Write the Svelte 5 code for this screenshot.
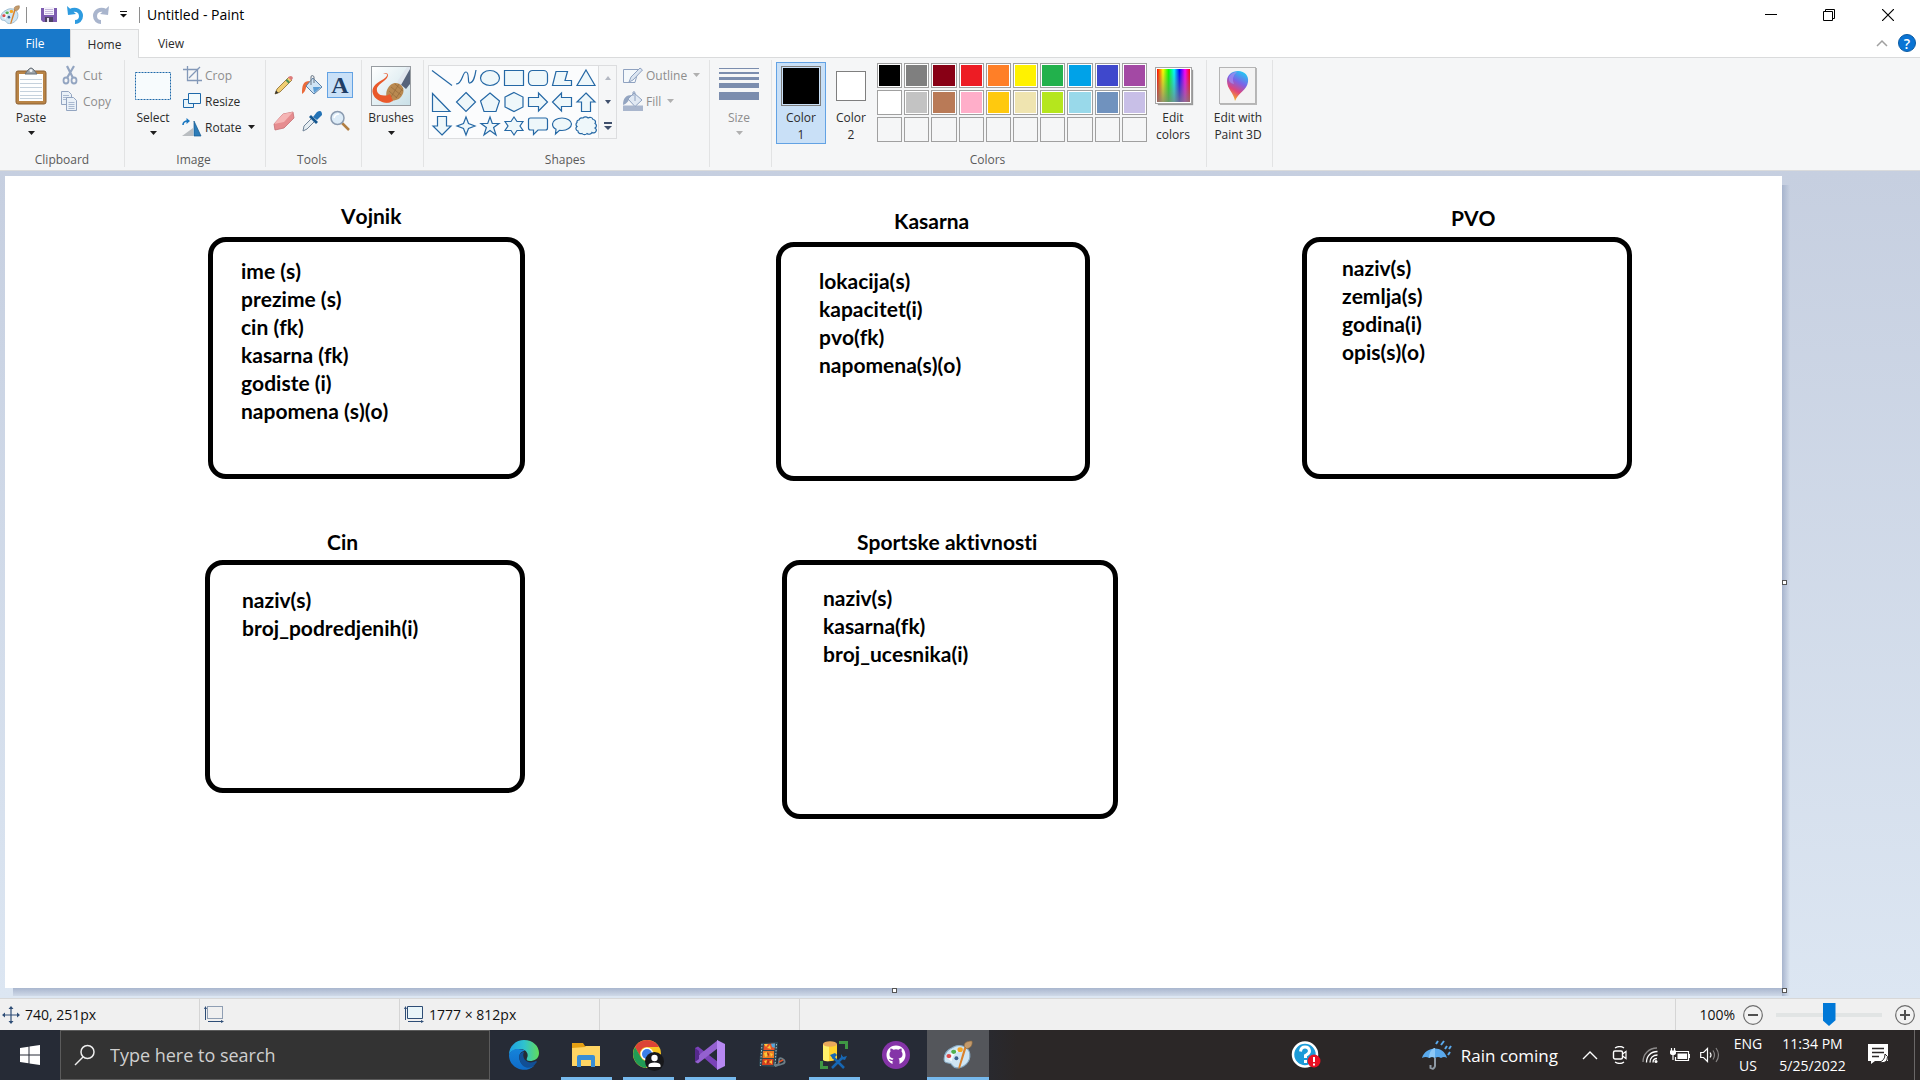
<script>
  const shapes = [
    { name: 'Line', d: 'M2 4.5L22 19.5' },
    { name: 'Curve', d: 'M2 18C9 18 8 6 12 6S13 18 16 17C20 16 21 10 22 4', open: true },
    { name: 'Oval', d: 'M2.5 12a9.5 7.5 0 1 0 19 0a9.5 7.5 0 1 0-19 0z' },
    { name: 'Rectangle', d: 'M2.5 4.5h19v15h-19z' },
    { name: 'Rounded rectangle', d: 'M6.500 4.500h11a4 4 0 0 1 4 4v7a4 4 0 0 1-4 4h-11a4 4 0 0 1-4-4v-7a4 4 0 0 1 4-4z' },
    { name: 'Polygon', d: 'M6 5.500H17.500L15 14.500H21.500V19.500H2.500z' },
    { name: 'Triangle', d: 'M12 4L21 19.500H3z' },
    { name: 'Right triangle', d: 'M2.500 3.500L20 21.500H2.500z' },
    { name: 'Diamond', d: 'M12 2.500L21.500 12L12 21.500L2.500 12z' },
    { name: 'Pentagon', d: 'M12 3L21.500 11L18 21.500H6L2.500 11z' },
    { name: 'Hexagon', d: 'M12 2.500L21 7V17L12 21.500L3 17V7z' },
    { name: 'Right arrow', d: 'M2.500 7.500H12.500V3L21.500 12L12.500 21V16.500H2.500z' },
    { name: 'Left arrow', d: 'M21.500 7.500H11.500V3L2.500 12L11.500 21V16.500H21.500z' },
    { name: 'Up arrow', d: 'M12 3L21 12H16.500V21.500H7.500V12H3z' },
    { name: 'Down arrow', d: 'M12 21L21 12H16.500V2.500H7.500V12H3z' },
    { name: 'Four-point star', d: 'M12 3L14.500 9.500L21 12L14.500 14.500L12 21L9.500 14.500L3 12L9.500 9.500z' },
    { name: 'Five-point star', d: 'M12 3L14.300 9.500H21L15.600 13.500L18 21L12 16.500L6 21L8.400 13.500L3 9.500H9.700z' },
    { name: 'Six-point star', d: 'M12 3L15 7.500H21L18 12L21 16.500H15L12 21L9 16.500H3L6 12L3 7.500H9z' },
    { name: 'Rounded callout', d: 'M4.500 4H19.500Q21.500 4 21.500 6V14Q21.500 16 19.500 16H12L7.500 20.500V16H4.500Q2.500 16 2.500 14V6Q2.500 4 4.500 4z' },
    { name: 'Oval callout', d: 'M12 4C17 4 21.500 6.500 21.500 10S17 16.500 12 16.500L9.500 16.300L5.500 20L6 15.200C3.500 14 2.500 12 2.500 10C2.500 6.500 7 4 12 4z' },
    { name: 'Cloud callout', d: 'M5 6a3 3 0 0 1 4-2a3 2.500 0 0 1 5 0a3 2.500 0 0 1 5 1.500a2.500 2.500 0 0 1 2 4a2.500 2.500 0 0 1 0 4.500a2.500 2.500 0 0 1-3 4.500a3 2.500 0 0 1-5 1a3 2.500 0 0 1-5 0a3 2.500 0 0 1-4-2.500a2.500 2.500 0 0 1-1-4.500a2.500 2.500 0 0 1 0-4a2 2 0 0 1 2-2.500z' }
  ];

  const palette = [
    ['Black', '#000000'], ['Gray-50%', '#7f7f7f'], ['Dark red', '#880015'], ['Red', '#ed1c24'], ['Orange', '#ff7f27'],
    ['Yellow', '#fff200'], ['Green', '#22b14c'], ['Turquoise', '#00a2e8'], ['Indigo', '#3f48cc'], ['Purple', '#a349a4'],
    ['White', '#ffffff'], ['Gray-25%', '#c3c3c3'], ['Brown', '#b97a57'], ['Rose', '#ffaec9'], ['Gold', '#ffc90e'],
    ['Light yellow', '#efe4b0'], ['Lime', '#b5e61d'], ['Light turquoise', '#99d9ea'], ['Blue-gray', '#7092be'], ['Lavender', '#c8bfe7']
  ];

  // Canvas objects, in canvas pixels.
  const entities = [
    { title: 'Vojnik', tx: 336, ty: 26, x: 203, y: 61, w: 317, h: 242, fx: 236, fy: 81, fields: ['ime (s)', 'prezime (s)', 'cin (fk)', 'kasarna (fk)', 'godiste (i)', 'napomena (s)(o)'] },
    { title: 'Kasarna', tx: 889, ty: 31, x: 771, y: 66, w: 314, h: 239, fx: 814, fy: 91, fields: ['lokacija(s)', 'kapacitet(i)', 'pvo(fk)', 'napomena(s)(o)'] },
    { title: 'PVO', tx: 1446, ty: 28, x: 1297, y: 61, w: 330, h: 242, fx: 1337, fy: 78, fields: ['naziv(s)', 'zemlja(s)', 'godina(i)', 'opis(s)(o)'] },
    { title: 'Cin', tx: 322, ty: 352, x: 200, y: 384, w: 320, h: 233, fx: 237, fy: 410, fields: ['naziv(s)', 'broj_podredjenih(i)'] },
    { title: 'Sportske aktivnosti', tx: 852, ty: 352, x: 777, y: 384, w: 336, h: 259, fx: 818, fy: 408, fields: ['naziv(s)', 'kasarna(fk)', 'broj_ucesnika(i)'] }
  ];

  let zoom = $state(50);
</script>

{#snippet caret()}
  <svg class="caret" width="7" height="4" viewBox="0 0 7 4" aria-hidden="true"><path d="M0 0h7L3.500 4z" fill="currentColor" /></svg>
{/snippet}

{#snippet paintLogo(size)}
  <svg width={size} height={size} viewBox="0 0 28 28" aria-hidden="true">
    <path d="M9 7C15 3 24 6 25 13C26 21 19 26 13 26C9 26 9 23 7 22C4 21 1 22 1 18C1 13 4 9 9 7z" fill="#cfe5f3" stroke="#86aac4" stroke-width="1" />
    <path d="M4 17C6 12 12 8 18 9C12 11 9 14 8 20z" fill="#f3faff" />
    <ellipse cx="5.500" cy="15" rx="2.300" ry="2" fill="#dd4b4b" />
    <ellipse cx="10" cy="11" rx="2.400" ry="2" fill="#4fb04f" />
    <ellipse cx="16" cy="9" rx="2.500" ry="2.200" fill="#f5a623" />
    <circle cx="12.500" cy="17" r="1.800" fill="#3b5f8c" />
    <path d="M22 7L16 26L14.500 27L14.500 25L20 6z" fill="#d9812b" />
    <path d="M20 6C19 3 22 1 27 1C28 4 26 8 22 8z" fill="#c39a6b" stroke="#8f6a3f" stroke-width=".6" />
  </svg>
{/snippet}

<div class="window">
  <header class="titlebar">
    <div class="quick">
      <span class="app">{@render paintLogo(20)}</span>
      <span class="rule"></span>
      <button class="qb save" aria-label="Save">
        <svg width="16" height="16" viewBox="0 0 16 16"><path d="M0 1h16v14H2L0 13z" fill="#7d5cb0" /><path d="M3 0h10v8H3z" fill="#f6f3fb" /><path d="M4 2.500h8M4 4.500h8M4 6.500h8" stroke="#c5b7dc" /><path d="M4 10h8v5H4z" fill="#4d4263" /><path d="M6 11h2v4H6z" fill="#e5e0ee" /></svg>
      </button>
      <button class="qb" aria-label="Undo">
        <svg width="16" height="18" viewBox="0 0 16 18"><path d="M3 5C9 2 14 5 14 10C14 14 11 16 8 16" fill="none" stroke="#2d9be0" stroke-width="4" /><path d="M0 0L1 9L9 8z" fill="#2d9be0" /></svg>
      </button>
      <button class="qb" aria-label="Redo">
        <svg width="16" height="18" viewBox="0 0 16 18"><path d="M13 5C7 2 2 5 2 10C2 14 5 16 8 16" fill="none" stroke="#a9b5cd" stroke-width="4" /><path d="M16 0L15 9L7 8z" fill="#a9b5cd" /></svg>
      </button>
      <button class="qb small" aria-label="Customize Quick Access Toolbar">
        <svg width="7" height="7" viewBox="0 0 7 7"><path d="M0 .5h7" stroke="#111" /><path d="M0 3h7L3.500 6.500z" fill="#111" /></svg>
      </button>
      <span class="rule"></span>
    </div>
    <h1>Untitled - Paint</h1>
    <div class="winbtns">
      <button aria-label="Minimize"><svg width="12" height="12" viewBox="0 0 12 12"><path d="M0 5.500h12" stroke="#000" /></svg></button>
      <button aria-label="Restore"><svg width="12" height="12" viewBox="0 0 12 12"><path d="M.5 2.500h9v9h-9zM2.500 2.500v-2h9v9h-2" fill="none" stroke="#000" /></svg></button>
      <button aria-label="Close"><svg width="12" height="12" viewBox="0 0 12 12"><path d="M0 0l12 12M12 0L0 12" stroke="#000" stroke-width="1.200" /></svg></button>
    </div>
  </header>

  <nav class="tabs">
    <button class="file">File</button>
    <button class="home">Home</button>
    <button class="view">View</button>
    <div class="tabend">
      <button aria-label="Minimize the Ribbon"><svg width="12" height="8" viewBox="0 0 12 8"><path d="M1 7L6 2L11 7" fill="none" stroke="#a0a0a0" stroke-width="1.500" /></svg></button>
      <button class="help" aria-label="Help">?</button>
    </div>
  </nav>

  <section class="ribbon">
    <div class="group clipboard">
      <div class="body start">
        <button class="big">
          <span class="pic">
            <svg width="32" height="38" viewBox="0 0 32 38">
              <rect x="1" y="4" width="30" height="33" rx="2" fill="#b98446" stroke="#8d6030" /><path d="M4 7h24v27H4z" fill="#fdfefe" />
              <path d="M5 12.500h22M5 16.500h22M5 20.500h22M5 24.500h22M5 28.500h22M5 31.500h22" stroke="#c4d1dc" />
              <path d="M10 7L13 3Q16-1 19 3L22 7z" fill="#9ba3aa" stroke="#666e76" /><circle cx="16" cy="3.500" r="1.500" fill="#f5f6f7" />
            </svg>
          </span>
          <span>Paste</span>{@render caret()}
        </button>
        <div class="rows">
          <button class="row off"><svg width="20" height="20" viewBox="0 0 20 20"><path d="M7 1L13 13M14 1L7 13" stroke="#93a5c1" stroke-width="2.200" /><ellipse cx="6" cy="15.500" rx="2.500" ry="3" fill="none" stroke="#93a5c1" stroke-width="1.800" /><ellipse cx="14" cy="15.500" rx="2.500" ry="3" fill="none" stroke="#93a5c1" stroke-width="1.800" /></svg>Cut</button>
          <button class="row off"><svg width="20" height="20" viewBox="0 0 20 20"><path d="M1.500.5h7l3 3v10h-10z" fill="#eaf1f8" stroke="#93a5c1" /><path d="M3 4.500h6M3 6.500h6M3 8.500h6" stroke="#a9b9d0" /><path d="M6.500 6.500h7l3 3v10h-10z" fill="#eaf1f8" stroke="#93a5c1" /><path d="M8.500 11.500h6M8.500 13.500h6M8.500 15.500h6M8.500 17.500h6" stroke="#a9b9d0" /></svg>Copy</button>
        </div>
      </div>
      <div class="label">Clipboard</div>
    </div>

    <div class="group image">
      <div class="body start">
        <button class="big">
          <span class="pic"><svg width="36" height="28" viewBox="0 0 36 28"><rect x=".5" y=".5" width="35" height="27" fill="#f7fbfd" stroke="#1e69aa" stroke-dasharray="2 1" /></svg></span>
          <span>Select</span>{@render caret()}
        </button>
        <div class="rows">
          <button class="row off"><svg width="20" height="20" viewBox="0 0 20 20"><path d="M1 4.500h14.500V19M5.500 1v14.500H20" fill="none" stroke="#8398b8" stroke-width="1.300" /><path d="M7 13L18 2" stroke="#8398b8" stroke-width="1.300" /></svg>Crop</button>
          <button class="row"><svg width="20" height="20" viewBox="0 0 20 20"><path d="M1.500 8.500h10v8h-10z" fill="#e8f4fa" stroke="#1e69aa" /><path d="M6.500 2.500h12v10h-12z" fill="#f2fafc" stroke="#1e69aa" /></svg>Resize</button>
          <button class="row"><svg width="20" height="20" viewBox="0 0 20 20"><path d="M0 19L11 11V19z" fill="#b9bdc1" /><path d="M12 4L19 19H12z" fill="#2c7cb8" stroke="#155a91" stroke-width=".7" /><path d="M1 8Q1 4 6 4" fill="none" stroke="#1976c0" stroke-width="1.600" /><path d="M4.500 1L8 4L4.500 7z" fill="#1976c0" /></svg>Rotate {@render caret()}</button>
        </div>
      </div>
      <div class="label">Image</div>
    </div>

    <div class="group toolset">
      <div class="body">
        <div class="tools">
          <button aria-label="Pencil"><svg width="22" height="22" viewBox="0 0 22 22"><path d="M2 20L4 15L16 3L19 6L7 18z" fill="#f0ce72" stroke="#8a6a2d" stroke-width=".8" /><path d="M14 5L17 8L15.500 9.500L12.500 6.500z" fill="#4d8f55" /><path d="M16 2.500Q19 1 20 4L18.500 6.500L15 3.500z" fill="#dc7b7b" /><path d="M2 20L3 16.500L5.500 19z" fill="#333" /></svg></button>
          <button aria-label="Fill with color"><svg width="22" height="22" viewBox="0 0 22 22"><path d="M1 20C1 11 2 7 9 7L7 11C4 12 6 17 1 20z" fill="#ea6a3a" /><path d="M12 4L21 13L13 20L5 12z" fill="#cfe4f5" stroke="#5c81a8" /><path d="M12 13L20 13L13 19z" fill="#5b9dd5" /><path d="M10 11V3Q11 0 13 3V9" fill="none" stroke="#7b8794" stroke-width="1.200" /></svg></button>
          <button class="on glyph" aria-label="Text">A</button>
          <button aria-label="Eraser"><svg width="22" height="22" viewBox="0 0 22 22"><path d="M10 4L20 2L21 8L11 18L2 20L1 14z" fill="#e68c8f" stroke="#c56f73" stroke-width=".8" /><path d="M10 4L20 2L11 12L1 14z" fill="#f5b5b5" /></svg></button>
          <button aria-label="Color picker"><svg width="22" height="22" viewBox="0 0 22 22"><path d="M2 21L3 16L11 8L14 11L6 19z" fill="#e5edf2" stroke="#718498" /><path d="M10 5L17 12L15 14L8 7z" fill="#14568f" /><path d="M12 7L16 2Q21-1 21 5L16 10z" fill="#2372b5" /></svg></button>
          <button aria-label="Magnifier"><svg width="22" height="22" viewBox="0 0 22 22"><path d="M13 13L20 20" stroke="#b17e42" stroke-width="2.500" /><circle cx="8.500" cy="8" r="6.500" fill="#ddecf8" stroke="#8b9bb0" stroke-width="1.500" /><path d="M5 8Q6 4 10 4" fill="none" stroke="#fff" stroke-width="1.500" /></svg></button>
        </div>
      </div>
      <div class="label">Tools</div>
    </div>

    <div class="group">
      <div class="body">
        <button class="big">
          <span class="pic">
            <svg width="40" height="40" viewBox="0 0 40 40">
              <defs><linearGradient id="brushbg" x2="1" y2="1"><stop stop-color="#fff" /><stop offset="1" stop-color="#c9e0e8" /></linearGradient></defs>
              <rect x=".5" y=".5" width="39" height="39" fill="url(#brushbg)" stroke="#979ca1" />
              <path d="M15 8C18 8 15 12 11 14C4 18 0 22 2 28C4 34 12 38 20 36L17 29C9 31 5 27 6 22C8 17 17 14 17 9Q17 6 12 8z" fill="#e9592b" />
              <path d="M39 2V18L35 23L28 17z" fill="#56637b" /><path d="M39 3L30 19L26 16L36 1H39z" fill="#e0e6ee" />
              <path d="M16 24C19 17 25 15 30 19C34 23 33 28 29 32C26 35 21 34 14 36C17 33 14 29 16 24z" fill="#b98950" /><path d="M20 21L30 29M18 25L26 32M24 18L32 25M25 32L32 22M20 31L28 18" stroke="#8e6435" stroke-width=".6" />
              <path d="M13 31L19 28L22 35Q17 38 11 36z" fill="#e9592b" />
            </svg>
          </span>
          <span>Brushes</span>{@render caret()}
        </button>
      </div>
      <div class="label"></div>
    </div>

    <div class="group shapeset">
      <div class="body start shapes">
        <div class="gallery">
          <div class="shapegrid">
            {#each shapes as s}
              <button aria-label={s.name}>
                <svg width="24" height="24" viewBox="0 0 24 24"><path d={s.d} fill={s.open ? 'none' : '#eef7fa'} stroke="#2568a5" stroke-width="1.200" /></svg>
              </button>
            {/each}
          </div>
          <div class="scroll">
            <button class="dim" aria-label="Scroll up"><svg width="6" height="4" viewBox="0 0 6 4"><path d="M0 4h6L3 0z" fill="currentColor" /></svg></button>
            <button aria-label="Scroll down"><svg width="6" height="4" viewBox="0 0 6 4"><path d="M0 0h6L3 4z" fill="currentColor" /></svg></button>
            <button aria-label="More shapes"><svg width="8" height="8" viewBox="0 0 8 8"><path d="M0 0h8v2H0zM0 4h8L4 8z" fill="currentColor" /></svg></button>
          </div>
        </div>
        <div class="rows">
          <button class="row off"><svg width="20" height="20" viewBox="0 0 20 20"><path d="M.5 4.500h15L12 17.500H.5z" fill="#f4f8fb" stroke="#8fa2c0" /><path d="M6 17L8 12L17 3L19.500 5L10 15z" fill="#dbe5f1" stroke="#8fa2c0" /></svg>Outline {@render caret()}</button>
          <button class="row off"><svg width="20" height="20" viewBox="0 0 20 20"><path d="M0 14.500h20V20H0z" fill="#a9b6cd" /><path d="M0 14C0 7 3 4 9 4L6 8Q5 12 0 14z" fill="#94a5c1" /><path d="M11 2L19 9L12 15.500L5 8z" fill="#e1e9f3" stroke="#8fa2c0" /><path d="M12 10V2Q12 0 10 1V5" fill="none" stroke="#8fa2c0" /></svg>Fill {@render caret()}</button>
        </div>
      </div>
      <div class="label">Shapes</div>
    </div>

    <div class="group">
      <div class="body">
        <button class="big off">
          <span class="pic"><svg width="40" height="36" viewBox="0 0 40 36"><path d="M0 0h40v1H0zM0 4h40v2H0zM0 9h40v3H0zM0 15h40v5H0zM0 24h40v8H0z" fill="#7b8dae" /></svg></span>
          <span>Size</span>{@render caret()}
        </button>
      </div>
      <div class="label"></div>
    </div>

    <div class="group colorset">
      <div class="body start">
        <button class="big on"><span class="pic"><span class="sw one"></span></span><span>Color<br />1</span></button>
        <button class="big"><span class="pic"><span class="sw two"></span></span><span>Color<br />2</span></button>
        <div class="palette">
          {#each palette as [name, value]}
            <button aria-label={name} style:background-color={value}></button>
          {/each}
          {#each Array(10) as _, i}
            <button class="empty" aria-label={`Custom color ${i + 1}`}></button>
          {/each}
        </div>
        <button class="big"><span class="pic"><span class="spectrum"></span></span><span>Edit<br />colors</span></button>
      </div>
      <div class="label">Colors</div>
    </div>

    <div class="group threed">
      <div class="body">
        <button class="big">
          <span class="pic">
            <svg width="38" height="38" viewBox="0 0 38 38">
              <defs>
                <linearGradient id="drop" x1=".8" y1="0" x2=".4" y2="1"><stop stop-color="#19d3f5" /><stop offset=".4" stop-color="#7a63e8" /><stop offset=".7" stop-color="#e0457a" /><stop offset="1" stop-color="#f7b41e" /></linearGradient>
              </defs>
              <path d="M1 1h37v37H1z" fill="#b8b8b8" /><rect x=".5" y=".5" width="36" height="36" fill="#f3f3f3" stroke="#b5b5b5" />
              <path d="M19 4C26 4 30 9 29 15C28 23 19 26 16 34C15 26 8 22 8 14C8 8 13 4 19 4z" fill="url(#drop)" />
              <path d="M10 10Q13 5 18 5Q12 10 15 17Q9 16 10 10z" fill="#a58cf0" opacity=".7" />
            </svg>
          </span>
          <span>Edit with<br />Paint 3D</span>
        </button>
      </div>
      <div class="label"></div>
    </div>
  </section>

  <main class="workspace">
    <div class="canvas">
      {#each entities as e}
        <h2 class="etitle" style:left={`${e.tx}px`} style:top={`${e.ty}px`}>{e.title}</h2>
        <div class="ebox" style:left={`${e.x}px`} style:top={`${e.y}px`} style:width={`${e.w}px`} style:height={`${e.h}px`}></div>
        <ul class="fields" style:left={`${e.fx}px`} style:top={`${e.fy}px`}>
          {#each e.fields as f}<li>{f}</li>{/each}
        </ul>
      {/each}
      <span class="shade right"></span>
      <span class="shade bottom"></span>
      <span class="handle e"></span>
      <span class="handle s"></span>
      <span class="handle se"></span>
    </div>
  </main>

  <footer class="status">
    <div class="cell"><svg width="18" height="18" viewBox="0 0 18 18"><path d="M9 2v14M2 9h14" stroke="#2e4d76" stroke-width="1.200" /><path d="M9 0l2.500 3h-5zM9 18l2.500-3h-5zM0 9l3-2.500v5zM18 9l-3-2.500v5z" fill="#2e4d76" /></svg>740, 251px</div>
    <div class="cell pad"><svg width="20" height="18" viewBox="0 0 20 18"><path d="M3.500.5h15v12h-15z" fill="none" stroke="#2e4d76" stroke-dasharray="1 1" /><path d="M1.500 1v13M4 15.500h15" stroke="#2e4d76" /><path d="M0 3l1.500-3L3 3zM17 14l3 1.500L17 17z" fill="#2e4d76" /></svg></div>
    <div class="cell pad"><svg width="20" height="18" viewBox="0 0 20 18"><path d="M3.500.5h15v12h-15z" fill="#e9f5f9" stroke="#2e4d76" /><path d="M1.500 1v13M4 15.500h15" stroke="#2e4d76" /><path d="M0 3l1.500-3L3 3zM17 14l3 1.500L17 17z" fill="#2e4d76" /></svg>1777 × 812px</div>
    <div class="cell"></div>
    <div class="fillcell"></div>
    <div class="zoom">
      <label for="zoom">100%</label>
      <button class="round" aria-label="Zoom out"><svg width="20" height="20" viewBox="0 0 20 20"><circle cx="10" cy="10" r="9.300" fill="#f2f2f2" stroke="#6d6d6d" stroke-width="1.200" /><path d="M5 10h10" stroke="#505050" stroke-width="2" /></svg></button>
      <input id="zoom" type="range" min="0" max="100" bind:value={zoom} />
      <button class="round" aria-label="Zoom in"><svg width="20" height="20" viewBox="0 0 20 20"><circle cx="10" cy="10" r="9.300" fill="#f2f2f2" stroke="#6d6d6d" stroke-width="1.200" /><path d="M5 10h10M10 5v10" stroke="#505050" stroke-width="2" /></svg></button>
    </div>
  </footer>

  <div class="taskbar">
    <button class="startbtn" aria-label="Start"><svg width="20" height="20" viewBox="0 0 20 20"><path d="M0 3L8.500 1.700V9.500H0zM9.500 1.500L20 0V9.500H9.500zM0 10.500H8.500V18.300L0 17zM9.500 10.500H20V20L9.500 18.500z" fill="#fff" /></svg></button>
    <label class="search">
      <svg width="22" height="22" viewBox="0 0 22 22" aria-hidden="true"><circle cx="13.500" cy="8" r="6.500" fill="none" stroke="#eee" stroke-width="1.500" /><path d="M9 13L1 21" stroke="#eee" stroke-width="1.500" /></svg>
      <input type="text" placeholder="Type here to search" aria-label="Search" />
    </label>
    <div class="apps">
      <button aria-label="Microsoft Edge">
        <svg width="30" height="30" viewBox="0 0 30 30">
          <defs>
            <linearGradient id="edgetop" x1="0" x2="1"><stop stop-color="#1d9fe5" /><stop offset=".5" stop-color="#2fc2cf" /><stop offset="1" stop-color="#62dc5a" /></linearGradient>
            <linearGradient id="edgelow" x1="0" y1="0" x2="0" y2="1"><stop stop-color="#1583da" /><stop offset="1" stop-color="#0f6bc7" /></linearGradient>
          </defs>
          <path d="M0 15C0 6 7 0 15 0C24 0 30 6 30 13C30 19 25 21 21 21C18 21 17 20 18 18C20 15 18 9 11 9C5 9 1 12 0 15z" fill="url(#edgetop)" />
          <path d="M0 15C2 8 12 8 16 11C11 11 9 16 11 21C13 26 20 27 25 26C20 31 13 30 10 29C3 26 0 21 0 15z" fill="url(#edgelow)" />
          <path d="M11 21C9 16 11 12 15 12C13 16 15 20 19 22C22 23 25 22 27 21C28 21 28 22 27 23C22 31 13 28 11 21z" fill="#124f95" />
        </svg>
      </button>
      <button class="run" aria-label="File Explorer"><svg width="28" height="24" viewBox="0 0 28 24"><path d="M0 0h11l2 3h15v5H0z" fill="#e5a013" /><path d="M0 5L13 4L14 3H28V23H0z" fill="#ffd563" /><path d="M5 14Q5 12 7 12H21Q23 12 23 14V24H19V17H9V24H5z" fill="#3a8ed6" /></svg></button>
      <button class="run" aria-label="Google Chrome">
        <svg width="32" height="32" viewBox="0 0 32 32">
          <circle cx="15" cy="15" r="14" fill="#f9c623" /><path d="M15 1A14 14 0 0 1 27 8H15A7 7 0 0 0 8.500 18L3 8A14 14 0 0 1 15 1z" fill="#dc4436" /><path d="M3 8L9 18.500A7 7 0 0 0 18 21.500L14 29A14 14 0 0 1 3 8z" fill="#209b55" />
          <circle cx="15" cy="15" r="6.500" fill="#fff" /><circle cx="15" cy="15" r="5" fill="#3c7fe8" /><circle cx="22.500" cy="22.500" r="9.500" fill="#17181b" /><circle cx="22.500" cy="19" r="3.200" fill="#fff" /><path d="M16.500 28V26Q17 23.500 22.500 23.500T28.500 26V28z" fill="#fff" />
        </svg>
      </button>
      <button class="run" aria-label="Visual Studio"><svg width="30" height="30" viewBox="0 0 30 30"><path d="M0 8L3 6.500L23 22V30L4 13.500V17L0 22z" fill="#7a42b8" /><path d="M0 22L3 23.500L23 8V0L0 18z" fill="#9461d0" /><path d="M22 0L30 4V26L22 30z" fill="#b788f2" /><path d="M0 8L4 11V19L0 22z" fill="#55298c" /></svg></button>
      <button aria-label="Movie Maker">
        <svg width="28" height="26" viewBox="0 0 28 26">
          <path d="M3 1L20 0L18 25L1 24z" fill="#2f4753" />
          <path d="M6 2L17 1.500L16.500 8L5.500 8z" fill="#e5542a" /><path d="M5 9H16V16L4.500 16z" fill="#ee7a24" /><path d="M4.500 17H15.500L15 23L4 23z" fill="#d9401f" />
          <path d="M6 2L10 2L8 5zM9 6L12 3L13 7zM6 11L9 10L10 14L7 15zM12 11L15 12L13 15zM6 19L9 18L8 22zM11 20L14 18L14 22z" fill="#f9c83a" />
          <path d="M13 1.700L17 1.500L16.700 6L14 5z" fill="#4ea6dd" /><path d="M9 10L11 12L10 15zM10 18L11 20L9 22z" fill="#9b2418" />
          <path d="M4 2L2.500 24M18.500 2L17 24" stroke="#9fc4d0" stroke-dasharray="1.500 1.500" />
          <path d="M17 24Q21 24 21 19T26 18Q28 21 24 22Q20 24 16 22" fill="none" stroke="#6b7d86" stroke-width="1.800" /><path d="M21 20l4-2" stroke="#e5542a" stroke-width="1.500" />
        </svg>
      </button>
      <button class="run" aria-label="SQL tools"><svg width="28" height="28" viewBox="0 0 28 28"><path d="M3 3V19Q10 22 17 18V3z" fill="#ffd42e" /><path d="M3 3V19Q6 21 9 20V3z" fill="#fff06a" /><ellipse cx="10" cy="3" rx="7" ry="2.800" fill="#eaa95b" /><path d="M19 1.500H26.500V8M1.500 20V26.500H8" fill="none" stroke="#3f9744" stroke-width="3" /><path d="M13 16L24 27M23 16L12 27" stroke="#1767b4" stroke-width="2.500" /><path d="M10 14L15 12L17 14L13 18zM21 13L23 16L27 15L25 19L21 18z" fill="#1767b4" /></svg></button>
      <button aria-label="GitHub Desktop"><svg width="28" height="28" viewBox="0 0 28 28"><circle cx="14" cy="14" r="14" fill="#8534a8" /><path d="M14 4.500C8 4.500 4.500 9 4.500 14C4.500 18 7 21.500 10.500 23V20C8 20.500 7.500 18.500 7 18C9 18 9 19 11 18.700Q11 18 11.500 17.500C8 17 7.500 15 7.500 13Q7.500 11.500 8.500 10.500Q8 9 8.500 7.500Q10 7.500 11.500 8.700Q14 8 16.500 8.700Q18 7.500 19.500 7.500Q20 9 19.500 10.500Q20.500 11.500 20.500 13C20.500 15 20 17 16.500 17.500Q17.500 18 17.500 20V23C21 21.500 23.500 18 23.500 14C23.500 9 20 4.500 14 4.500z" fill="#fff" /></svg></button>
      <button class="run active" aria-label="Paint">{@render paintLogo(30)}</button>
    </div>
    <div class="tray">
      <button class="qa" aria-label="Get help"><svg width="30" height="28" viewBox="0 0 30 28"><circle cx="14" cy="13.500" r="12" fill="#1c9bd8" stroke="#fff" stroke-width="2.500" /><path d="M9.500 10.500Q10 6 14 6T18.500 10Q18.500 12.500 14.500 14.500V17M14.500 19V22" fill="none" stroke="#fff" stroke-width="3" /><circle cx="23" cy="20" r="6.500" fill="#e81123" /><path d="M23 16v5M23 22.500v2" stroke="#fff" stroke-width="2" /></svg></button>
      <button class="weather"><svg width="30" height="30" viewBox="0 0 30 30"><path d="M0 18C3 7 21 4 25 18Q22 16 19 18Q16 16 13 18Q10 16 7 18Q4 16 0 18z" fill="#5aa9ec" /><path d="M12 8Q7 11 7 18Q10 16 13 18V8z" fill="#8cc8f7" /><path d="M13 18V26Q12 30 8.500 28V25" fill="none" stroke="#8f9aa5" stroke-width="2" /><path d="M14 4l2-3M19 5l3-4M23 9l2-3M27 9l2-3M26 15l2-3" stroke="#5aa9ec" stroke-width="2" /></svg>Rain coming</button>
      <button class="ti" aria-label="Show hidden icons"><svg width="16" height="10" viewBox="0 0 16 10"><path d="M1 9L8 2L15 9" fill="none" stroke="#fff" stroke-width="1.400" /></svg></button>
      <button class="ti" aria-label="Meet Now"><svg width="16" height="18" viewBox="0 0 16 18"><path d="M3 2Q8-1 12 2M3 16Q8 19 12 16" fill="none" stroke="#fff" stroke-width="1.300" /><rect x="1.500" y="5" width="9" height="8" rx="1.500" fill="none" stroke="#fff" stroke-width="1.400" /><path d="M10.500 8L14 5.500V12.500L10.500 10" fill="none" stroke="#fff" stroke-width="1.200" /></svg></button>
      <button class="ti" aria-label="Network"><svg width="16" height="16" viewBox="0 0 16 16"><path d="M1 15C1 7 7 1 15 1" fill="none" stroke="#8d8b8b" stroke-width="1.300" /><path d="M4.500 15.500C4.500 9 9 4.500 15.500 4.500M8 15.500C8 11 11 8 15.500 8M11 15.500Q11 11.500 15 11.500" fill="none" stroke="#fff" stroke-width="1.300" /><circle cx="14" cy="14.500" r="1.500" fill="#fff" /></svg></button>
      <button class="ti" aria-label="Battery"><svg width="20" height="14" viewBox="0 0 20 14"><path d="M6 3.500H18.500V12.500H5.500V9" fill="none" stroke="#fff" stroke-width="1.200" /><path d="M7.500 5.500H17V11H7.500zM19 6h1v4h-1z" fill="#fff" /><path d="M1.500 0V3M4.500 0V3M3 6V12" stroke="#fff" stroke-width="1.200" /><path d="M0 2.500H6V5Q6 7 3 7T0 5z" fill="#fff" /></svg></button>
      <button class="ti" aria-label="Volume"><svg width="20" height="16" viewBox="0 0 20 16"><path d="M.7 5.500H3.500L7.500 1.500V14.500L3.500 10.500H.7z" fill="none" stroke="#fff" stroke-width="1.200" /><path d="M10 5.500Q12 8 10 10.500" fill="none" stroke="#fff" stroke-width="1.200" /><path d="M13 3.500Q16 8 13 12.500M16 1Q21 8 16 15" fill="none" stroke="#858383" stroke-width="1.200" /></svg></button>
      <button class="two lang">ENG<br />US</button>
      <button class="two clock">11:34 PM<br />5/25/2022</button>
      <button class="notif" aria-label="Notifications"><svg width="22" height="22" viewBox="0 0 22 22"><path d="M0 0H20V17H7L3 20V17H0z" fill="#fff" /><path d="M4 4.500H16M4 8.500H16M4 12.500H11" stroke="#2b2727" stroke-width="1.500" /><path d="M17 10Q21 12 19 16T11 18Q17 17 17 10z" fill="#fff" stroke="#2b2727" /></svg></button>
      <span class="peek"></span>
    </div>
  </div>
</div>

<style>
  :global(body) { margin: 0; }
  .window {
    min-height: 100vh;
    display: flex;
    flex-direction: column;
    font: 12px/17px 'Open Sans', 'Noto Sans', sans-serif;
    color: #2b2b2b;
    background: #fff;
  }
  button {
    font: inherit;
    color: inherit;
    background: none;
    border: 0;
    padding: 0;
    display: flex;
    align-items: center;
    justify-content: center;
    white-space: nowrap;
  }
  svg { display: block; flex: none; }
  h1, h2, ul { margin: 0; padding: 0; font-weight: 400; list-style: none; }

  .titlebar { display: flex; align-items: center; height: 29px; }
  .quick { display: flex; align-items: center; }
  .app { width: 26px; }
  .rule { width: 1px; height: 16px; background: #8e8e8e; }
  .qb { width: 26px; height: 28px; }
  .qb.save { margin-left: 9px; }
  .qb.small { width: 18px; margin-right: 7px; }
  h1 { font-size: 14px; line-height: 20px; color: #000; margin-left: 7px; flex: 1; }
  .winbtns { display: flex; padding-right: 2px; }
  .winbtns button { width: 58px; height: 28px; }
  .winbtns button:last-child { width: 60px; }

  .tabs { display: flex; height: 28px; border-bottom: 1px solid #dadbdc; }
  .tabs .file { width: 70px; background: #1979ca; color: #fff; }
  .home { width: 69px; height: 29px; box-sizing: border-box; background: #f5f6f7; border: 1px solid #dadbdc; border-bottom: 0; }
  .view { width: 64px; }
  .tabend { margin-left: auto; display: flex; align-items: center; gap: 10px; padding-right: 4px; }
  .help { width: 18px; height: 18px; border-radius: 50%; background: #0a74d4; border: 1px solid #0b5ba3; color: #fff; font-size: 14px; font-weight: 600; }

  .ribbon { display: flex; background: #f5f6f7; padding: 2px 0 3px; border-bottom: 1px solid #dadbdc; }
  .group { display: flex; flex-direction: column; box-sizing: border-box; border-right: 1px solid #e2e3e4; padding: 2px 3px 0 0; width: 62px; flex: none; }
  .clipboard { width: 125px; padding-right: 0; }
  .image { width: 141px; }
  .toolset { width: 96px; }
  .shapeset { width: 286px; }
  .colorset { width: 435px; }
  .threed { width: 66px; }
  .body { display: flex; height: 89px; justify-content: center; align-items: flex-start; }
  .body.start { justify-content: flex-start; padding-left: 4px; }
  .clipboard .body { padding-left: 6px; }
  .image .body { padding-left: 3px; }
  .label { text-align: center; color: #5a5a5a; height: 16px; }
  .big { flex-direction: column; justify-content: flex-start; width: 50px; height: 82px; box-sizing: border-box; flex: none; }
  .pic { height: 47px; display: flex; align-items: center; justify-content: center; }
  .big .caret { margin-top: 5px; }
  .caret { color: #1e1e1e; }
  .off { color: #8d8d8d; }
  .off .caret { color: #b0b0b0; }
  .rows { display: flex; flex-direction: column; align-items: flex-start; margin-left: 4px; }
  .row { height: 26px; gap: 3px; }
  .row .caret { margin-left: 3px; }
  .on { background: #c9e0f7; outline: 1px solid #62a2e4; outline-offset: -1px; }

  .tools { display: grid; grid-template-columns: repeat(3, 26px); gap: 10px 2px; padding-top: 10px; }
  .tools button { height: 26px; }
  .glyph { font: bold 24px/26px 'Liberation Serif', serif; color: #1f3d66; }

  .body.shapes { align-items: flex-start; }
  .gallery { display: flex; border: 1px solid #dcdddf; background: #fbfcfd; margin-top: 3px; }
  .shapegrid { display: grid; grid-template-columns: repeat(7, 24px); grid-auto-rows: 24px; padding-left: 1px; }
  .scroll { width: 17px; display: grid; grid-template-rows: repeat(3, 24px); background: #f5f6f7; border-left: 1px solid #dcdddf; color: #3f4f6c; }
  .scroll .dim { color: #b3b8c2; }
  .shapes .rows { margin-left: 6px; }

  .sw { box-sizing: border-box; border: 1px solid #7f7f7f; }
  .one { width: 40px; height: 40px; background: #000; box-shadow: inset 0 0 0 1px #c9e0f7; }
  .two.sw { width: 30px; height: 30px; background: #fff; }
  .palette { display: grid; width: 270px; grid-template-columns: repeat(10, 1fr); grid-auto-rows: 25px; gap: 2px; margin: 1px 1px 0; flex: none; }
  .palette button { border: 1px solid #a0a0a0; box-shadow: inset 0 0 0 1px #fff; }
  .palette .empty { box-shadow: none; }
  .spectrum {
    width: 33px; height: 33px; border: 1px solid #fff; outline: 1px solid #a5a5a5; box-shadow: 2px 2px 1px #999;
    background: linear-gradient(transparent, #808080cc), linear-gradient(90deg, #f00, #ff0 18%, #0f0 35%, #0ff 52%, #00f 68%, #f0f 85%, #f00);
  }

  .workspace { flex: 1; display: flex; background: linear-gradient(#c6cfe0, #dce6f2); padding: 5px 138px 10px 5px; }
  .canvas { position: relative; flex: 1; min-height: 700px; background: #fff; color: #000; font: bold 21px/28px Lato, 'Open Sans', sans-serif; font-kerning: none; font-variant-ligatures: none; }
  .etitle, .fields { position: absolute; font-size: 21px; font-weight: 700; white-space: nowrap; }
  .ebox { position: absolute; box-sizing: border-box; border: 5px solid #000; border-radius: 18px; }
  .shade { position: absolute; }
  .right { left: 100%; top: 9px; bottom: -8px; width: 8px; background: linear-gradient(90deg, #a7b4cd, #a7b4cd00); }
  .bottom { top: 100%; left: 8px; right: 0; height: 8px; background: linear-gradient(#a9b6ce, #cfd9e8); }
  .handle { position: absolute; width: 3px; height: 3px; border: 1px solid #555; background: #fff; }
  .handle.e { left: 100%; top: 50%; margin-top: -2px; }
  .handle.s { left: 50%; top: 100%; margin-left: -2px; }
  .handle.se { left: 100%; top: 100%; }

  .status { display: flex; height: 31px; border-top: 1px solid #d7d7d7; background: #f0f0f0; color: #111; font-size: 14px; line-height: 20px; }
  .cell { width: 197px; padding-left: 2px; border-right: 1px solid #d5d5d5; display: flex; align-items: center; gap: 5px; }
  .cell.pad { padding-left: 4px; width: 195px; }
  .fillcell { flex: 1; border-right: 1px solid #d5d5d5; }
  .zoom { display: flex; align-items: center; padding: 0 5px 0 23px; gap: 8px; }
  .zoom input { appearance: none; width: 106px; height: 24px; margin: 0 5px; background: linear-gradient(#e1e4e4, #e1e4e4) center / 100% 4px no-repeat; }
  .zoom input::-webkit-slider-thumb { appearance: none; width: 13px; height: 23px; background: #0078d7; clip-path: polygon(0 0, 100% 0, 100% 75%, 50% 100%, 0 75%); }

  .taskbar { display: flex; height: 50px; background: linear-gradient(90deg, #262b36 50%, #2b2727 53%); color: #fff; }
  .startbtn { width: 60px; }
  .search { display: flex; align-items: center; gap: 14px; width: 430px; box-sizing: border-box; border: 1px solid #5b5b5b; background: #333; padding-left: 13px; }
  .search input { flex: 1; min-width: 0; background: none; border: 0; padding: 0; font: 18px/24px 'Open Sans', sans-serif; color: #fff; outline: 0; }
  .search input::placeholder { color: #cfcfcf; opacity: 1; }
  .apps { display: flex; margin-left: 3px; }
  .apps button { width: 62px; position: relative; }
  .run::after { content: ''; position: absolute; left: 6px; right: 5px; bottom: 0; height: 3px; background: #76b9ed; }
  .active { background: #54565b; }
  .active::after { left: 0; right: 0; }
  .tray { display: flex; margin-left: auto; }
  .qa { margin-right: 101px; }
  .weather { font-size: 17px; gap: 9px; margin-right: 17px; }
  .ti { width: 30px; }
  .two { font-size: 14px; line-height: 22px; }
  .lang { width: 46px; }
  .clock { width: 83px; }
  .notif { width: 50px; margin-right: 10px; }
  .peek { width: 5px; border-left: 1px solid #6a6767; }
</style>
